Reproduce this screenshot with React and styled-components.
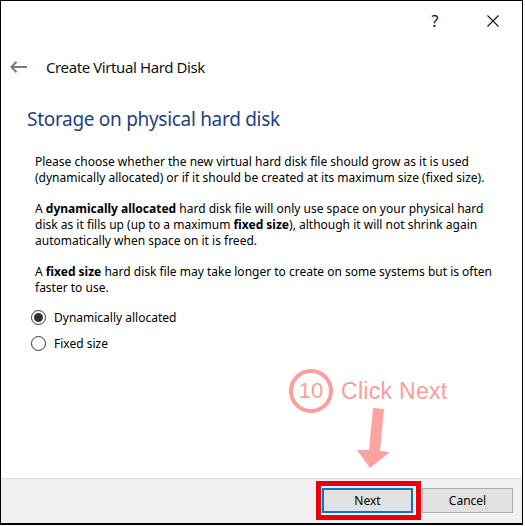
import styled, { createGlobalStyle } from 'styled-components';

const GlobalStyle = createGlobalStyle`
  body {
    margin: 0;
    background: #ffffff;
    font-family: 'Noto Sans', 'Open Sans', sans-serif;
  }
`;

const Window = styled.div`
  position: relative;
  box-sizing: border-box;
  width: 523px;
  height: 525px;
  border: 1px solid #000;
  border-bottom-width: 2px;
  display: flex;
  flex-direction: column;
  background: #fff;
  color: #000;
`;

const TitleBar = styled.div`
  height: 39px;
  display: flex;
  justify-content: flex-end;
  align-items: center;
`;

const TitleButton = styled.button`
  width: 58px;
  height: 39px;
  border: none;
  background: transparent;
  display: flex;
  align-items: center;
  justify-content: center;
  padding: 0;
  font-family: 'Noto Sans', sans-serif;
  font-size: 16px;
  color: #111;
`;

const Header = styled.div`
  height: 54px;
  display: flex;
  align-items: center;
  padding-left: 9px;
  gap: 18px;
`;

const HeaderTitle = styled.span`
  font-size: 15px;
  letter-spacing: -0.4px;
  color: #111;
`;

const Heading = styled.h1`
  margin: 11px 0 0 26px;
  font-size: 19px;
  letter-spacing: -0.3px;
  line-height: 28px;
  font-weight: 400;
  color: #1f3f7e;
`;

const Body = styled.div`
  margin: 21px 0 0 34px;
`;

const Para = styled.p`
  margin: 0 0 15px;
  font-size: 12px;
  line-height: 16px;
  white-space: nowrap;
  b {
    font-weight: 700;
  }
`;

const Options = styled.div`
  margin: -7px 0 0 30px;
`;

const Option = styled.label`
  height: 26px;
  display: flex;
  align-items: center;
  gap: 8px;
  font-size: 12px;
`;

const Radio = styled.span`
  box-sizing: border-box;
  width: 15px;
  height: 15px;
  border-radius: 50%;
  border: 1px solid #333;
  display: flex;
  align-items: center;
  justify-content: center;
  &::after {
    content: '';
    width: 9px;
    height: 9px;
    border-radius: 50%;
    background: ${(p) => (p.checked ? '#333' : 'transparent')};
  }
`;

const Footer = styled.div`
  margin-top: auto;
  border-top: 1px solid #dfdfdf;
  background: #f0f0f0;
  padding: 9px 9px 10px 0;
  display: flex;
  justify-content: flex-end;
  gap: 9px;
`;

const ButtonWrap = styled.div`
  position: relative;
`;

const Highlight = styled.div`
  position: absolute;
  top: -7px;
  bottom: -7px;
  left: -6px;
  right: -8px;
  border: 5px solid #e8000a;
`;

const Button = styled.button`
  box-sizing: border-box;
  width: 91px;
  height: 25px;
  background: #e1e1e1;
  border: ${(p) => (p.primary ? '2px solid #0078d7' : '1px solid #adadad')};
  font-family: 'Noto Sans', sans-serif;
  font-size: 12px;
  color: #000;
  padding: 0;
`;

const Annotation = styled.div`
  position: absolute;
  left: 288px;
  top: 368px;
  display: flex;
  align-items: center;
  gap: 8px;
  color: #ff9c9c;
  font-family: 'Liberation Sans', Arial, sans-serif;
`;

const StepBadge = styled.div`
  box-sizing: border-box;
  width: 44px;
  height: 44px;
  border-radius: 50%;
  border: 4px solid #ff9c9c;
  display: flex;
  align-items: center;
  justify-content: center;
  font-size: 22px;
`;

const StepText = styled.span`
  font-size: 23px;
  letter-spacing: 0.3px;
`;

const Arrow = styled.svg`
  position: absolute;
  left: 0;
  top: 0;
  pointer-events: none;
`;

export default function App() {
  return (
    <>
      <GlobalStyle />
      <Window>
        <TitleBar>
          <TitleButton>?</TitleButton>
          <TitleButton>
            <svg width="14" height="14" viewBox="0 0 14 14">
              <path d="M1.5 1.5 L12.5 12.5 M12.5 1.5 L1.5 12.5" stroke="#111" strokeWidth="1.1" />
            </svg>
          </TitleButton>
        </TitleBar>
        <Header>
          <svg width="18" height="12" viewBox="0 0 18 12">
            <path d="M1 6 H17 M6.5 0.8 L1.3 6 L6.5 11.2" stroke="#7a7a7a" strokeWidth="2" fill="none" />
          </svg>
          <HeaderTitle>Create Virtual Hard Disk</HeaderTitle>
        </Header>
        <Heading>Storage on physical hard disk</Heading>
        <Body>
          <Para>
            Please choose whether the new virtual hard disk file should grow as it is used
            <br />
            (dynamically allocated) or if it should be created at its maximum size (fixed size).
          </Para>
          <Para>
            A <b>dynamically allocated</b> hard disk file will only use space on your physical hard
            <br />
            disk as it fills up (up to a maximum <b>fixed size</b>), although it will not shrink again
            <br />
            automatically when space on it is freed.
          </Para>
          <Para>
            A <b>fixed size</b> hard disk file may take longer to create on some systems but is often
            <br />
            faster to use.
          </Para>
        </Body>
        <Options>
          <Option>
            <Radio checked />
            Dynamically allocated
          </Option>
          <Option>
            <Radio />
            Fixed size
          </Option>
        </Options>
        <Footer>
          <ButtonWrap>
            <Button primary>Next</Button>
            <Highlight />
          </ButtonWrap>
          <Button>Cancel</Button>
        </Footer>
        <Annotation>
          <StepBadge>10</StepBadge>
          <StepText>Click Next</StepText>
        </Annotation>
        <Arrow width="523" height="525" viewBox="1 1 523 525">
          <polygon
            points="373,408 384,409 380,451 390,452 370,468 357,450 369,450"
            fill="#ffa2a2"
          />
        </Arrow>
      </Window>
    </>
  );
}
